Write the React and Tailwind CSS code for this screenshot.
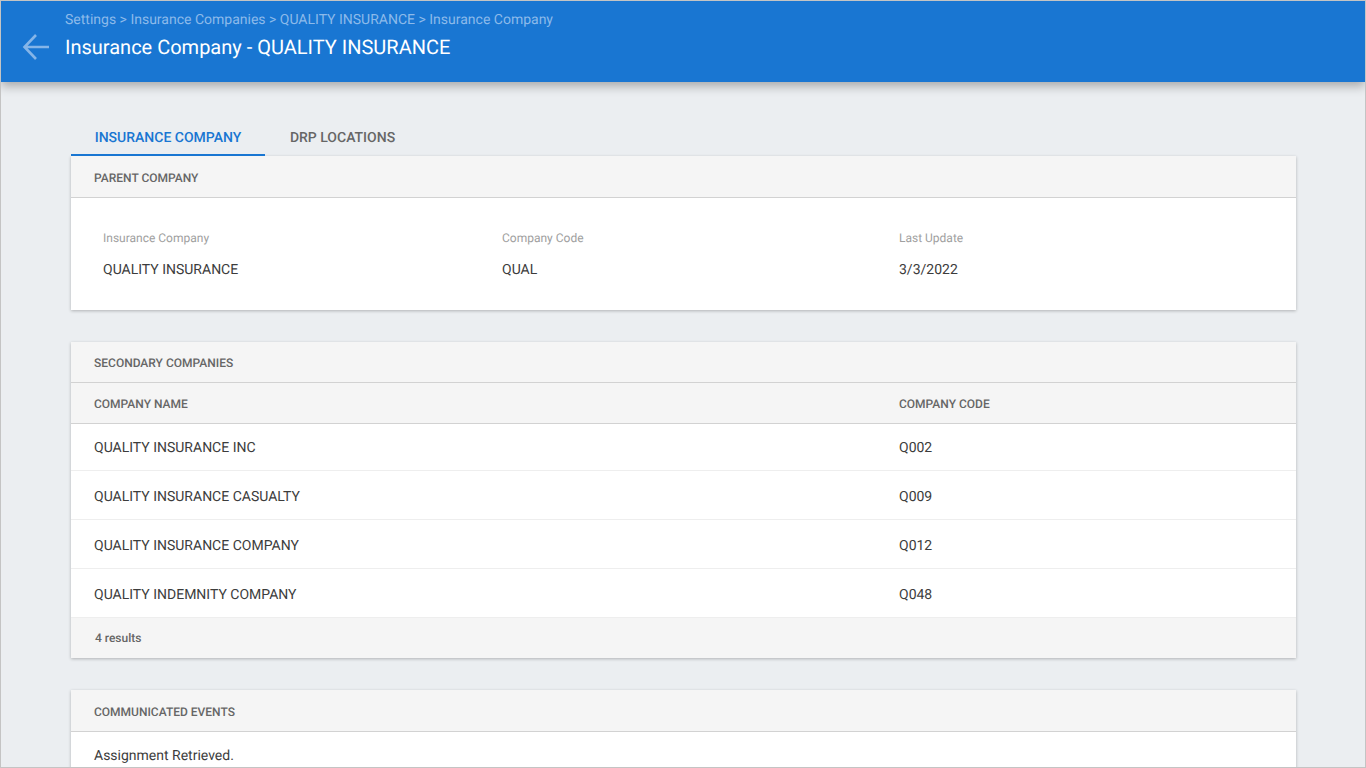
import React from "react";

function Card({ children, className = "" }) {
  return <section className={`bg-white shadow-[0_1px_3px_rgba(0,0,0,0.25)] ${className}`}>{children}</section>;
}

function SectionHead({ children, tall, extra }) {
  return (
    <div className={`${tall ? "h-[42px]" : "h-[41px]"} ${extra || "pt-[1px]"} flex items-center pl-[23px] bg-[#f5f5f5] border-b border-[#d2d2d2] text-xs font-medium text-[#666666]`}>
      {children}
    </div>
  );
}

function Field({ label, value, className }) {
  return (
    <div className={className}>
      <div className="text-xs leading-[16px] text-[#a0a0a0]">{label}</div>
      <div className="mt-[16px] text-sm leading-[16px] text-[#3c3c3c]">{value}</div>
    </div>
  );
}

const rows = [
  ["QUALITY INSURANCE INC", "Q002", "h-[47px] pt-[2px]"],
  ["QUALITY INSURANCE CASUALTY", "Q009", "h-[49px] pt-[4px]"],
  ["QUALITY INSURANCE COMPANY", "Q012", "h-[49px] pt-[4px]"],
  ["QUALITY INDEMNITY COMPANY", "Q048", "h-[49px] pt-[4px]"],
];

export default function App() {
  return (
    <div className="h-screen overflow-hidden border border-[#c4c4c4] bg-[#ebeef1] font-['Roboto',sans-serif] antialiased [text-rendering:geometricPrecision]">
      <header className="relative z-10 h-[81px] bg-[#1976d2] shadow-[0_4px_10px_rgba(0,0,0,0.3)] flex">
        <div className="w-[64px] pl-[20px] pt-[31px] shrink-0">
          <svg width="30" height="30" viewBox="0 0 30 30" fill="none" stroke="#85b5e8" strokeWidth="2.6">
            <path d="M28 15H4M15 3 3.5 15 15 27" />
          </svg>
        </div>
        <div>
          <div className="mt-[11px] text-sm leading-[16px] text-[#8cbaea]">
            Settings &gt; Insurance Companies &gt; QUALITY INSURANCE &gt; Insurance Company
          </div>
          <h1 className="mt-[6px] text-xl leading-[26px] font-normal text-white">
            Insurance Company - QUALITY INSURANCE
          </h1>
        </div>
      </header>

      <main className="pl-[70px] pr-[69px]">
        <nav className="pt-[36px] flex h-[74px]">
          <div className="w-[194px] h-[38px] pt-[4px] flex items-center justify-center border-b-2 border-[#1976d2] text-sm font-medium text-[#1976d2]">
            INSURANCE COMPANY
          </div>
          <div className="w-[155px] h-[38px] pt-[2px] flex items-center justify-center text-sm font-medium text-[#666666]">
            DRP LOCATIONS
          </div>
        </nav>

        <Card>
          <SectionHead tall extra="pt-[3px]">PARENT COMPANY</SectionHead>
          <div className="h-[112px] flex pt-[32px] pl-[32px]">
            <Field className="w-[399px]" label="Insurance Company" value="QUALITY INSURANCE" />
            <Field className="w-[397px]" label="Company Code" value="QUAL" />
            <Field label="Last Update" value="3/3/2022" />
          </div>
        </Card>

        <Card className="mt-[32px]">
          <SectionHead>SECONDARY COMPANIES</SectionHead>
          <div className="h-[41px] flex items-center pl-[23px] pt-[1px] bg-[#f5f5f5] border-b border-[#d2d2d2] text-xs font-medium text-[#666666]">
            <div className="w-[805px]">COMPANY NAME</div>
            <div>COMPANY CODE</div>
          </div>
          {rows.map(([name, code, h]) => (
            <div key={code} className={`flex items-center pl-[23px] text-sm text-[#3c3c3c] border-b border-[#eeeeee] ${h}`}>
              <div className="w-[805px]">{name}</div>
              <div>{code}</div>
            </div>
          ))}
          <div className="h-[40px] flex items-center pl-[24px] bg-[#f5f5f5] text-xs font-medium text-[#666666]">
            4 results
          </div>
        </Card>

        <Card className="mt-[32px]">
          <SectionHead tall extra="pt-[3px]">COMMUNICATED EVENTS</SectionHead>
          <div className="pl-[23px] pt-[16px] pb-[15px] text-sm leading-[16px] text-[#3c3c3c]">Assignment Retrieved.</div>
        </Card>
      </main>
    </div>
  );
}
